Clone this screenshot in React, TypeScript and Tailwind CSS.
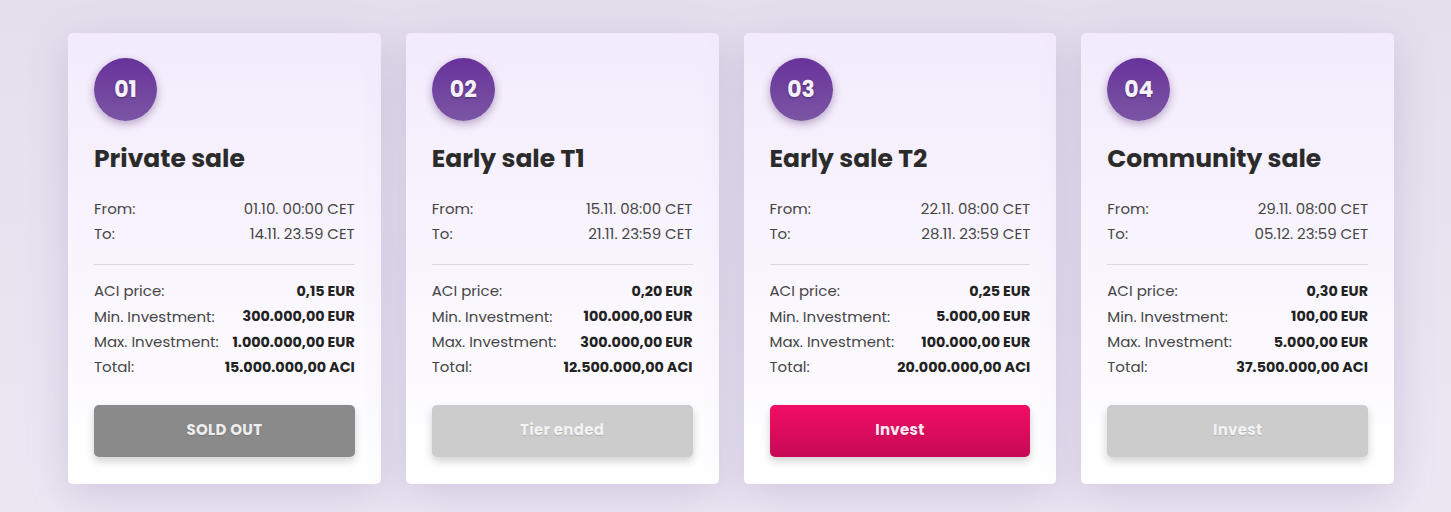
type Tier = {
  num: string;
  title: string;
  from: string;
  to: string;
  price: string;
  min: string;
  max: string;
  total: string;
  button: string;
  variant: "sold" | "ended" | "active" | "disabled";
};

const tiers: Tier[] = [
  {
    num: "01",
    title: "Private sale",
    from: "01.10. 00:00 CET",
    to: "14.11. 23.59 CET",
    price: "0,15 EUR",
    min: "300.000,00 EUR",
    max: "1.000.000,00 EUR",
    total: "15.000.000,00 ACI",
    button: "SOLD OUT",
    variant: "sold",
  },
  {
    num: "02",
    title: "Early sale T1",
    from: "15.11. 08:00 CET",
    to: "21.11. 23:59 CET",
    price: "0,20 EUR",
    min: "100.000,00 EUR",
    max: "300.000,00 EUR",
    total: "12.500.000,00 ACI",
    button: "Tier ended",
    variant: "ended",
  },
  {
    num: "03",
    title: "Early sale T2",
    from: "22.11. 08:00 CET",
    to: "28.11. 23:59 CET",
    price: "0,25 EUR",
    min: "5.000,00 EUR",
    max: "100.000,00 EUR",
    total: "20.000.000,00 ACI",
    button: "Invest",
    variant: "active",
  },
  {
    num: "04",
    title: "Community sale",
    from: "29.11. 08:00 CET",
    to: "05.12. 23:59 CET",
    price: "0,30 EUR",
    min: "100,00 EUR",
    max: "5.000,00 EUR",
    total: "37.500.000,00 ACI",
    button: "Invest",
    variant: "disabled",
  },
];

const buttonStyles = {
  sold: "bg-[#8a8a8a] text-[#eeeeee]",
  ended: "bg-[#cccccc] text-[#f2f2f2]",
  active: "bg-gradient-to-b from-[#f20d66] to-[#c60a55] text-[#fbe7f0]",
  disabled: "bg-[#cccccc] text-[#f2f2f2]",
};

function Row({ label, value, bold, h }: { label: string; value: string; bold?: boolean; h: string }) {
  return (
    <div className={`flex items-center justify-between whitespace-nowrap ${h}`}>
      <span className="text-[#454545]">{label}</span>
      <span className={bold ? "font-bold text-[#222222] text-[14.3px]" : "text-[#454545]"}>{value}</span>
    </div>
  );
}

function TierCard({ tier }: { tier: Tier }) {
  return (
    <div className="h-[451px] rounded-[5px] bg-gradient-to-b from-[#f3ebfc] to-white px-[26px] pt-[25px] shadow-[0_10px_40px_rgba(120,90,170,0.22)]">
      {/* Number badge */}
      <div className="w-[63px] h-[63px] rounded-full bg-gradient-to-b from-[#68329a] to-[#7a55a4] flex items-center justify-center shadow-[0_3px_8px_rgba(60,20,90,0.35)]">
        <span className="text-[#f6f0fb] font-bold text-[22px] [text-shadow:0_1px_2px_rgba(0,0,0,0.35)]">{tier.num}</span>
      </div>
      <h2 className="mt-[21px] text-[25px] font-bold text-[#2b2b2b] leading-[34px] whitespace-nowrap">{tier.title}</h2>
      <div className="mt-[20.5px] text-[15px]">
        <Row label="From:" value={tier.from} h="h-[25px]" />
        <Row label="To:" value={tier.to} h="h-[25px]" />
      </div>
      <div className="mt-[17.5px] border-t border-[#dcd8e0]" />
      <div className="mt-[14px] text-[15px]">
        <Row label="ACI price:" value={tier.price} bold h="h-[25.3px]" />
        <Row label="Min. Investment:" value={tier.min} bold h="h-[25.3px]" />
        <Row label="Max. Investment:" value={tier.max} bold h="h-[25.3px]" />
        <Row label="Total:" value={tier.total} bold h="h-[25.3px]" />
      </div>
      <button
        className={`mt-[24.5px] w-full h-[52px] rounded-[5px] font-bold text-[15px] tracking-[0.3px] shadow-[0_4px_8px_rgba(0,0,0,0.18)] [text-shadow:0_1px_1px_rgba(0,0,0,0.15)] ${buttonStyles[tier.variant]}`}
      >
        {tier.button}
      </button>
    </div>
  );
}

export default function App() {
  return (
    <div
      className="min-h-[512px] w-full bg-gradient-to-b from-[#e4dfec] to-[#ebe7f2] pt-[33px] pl-[68px]"
      style={{ fontFamily: "Poppins, Inter, 'Noto Sans', sans-serif" }}
    >
      <div className="grid grid-cols-4 w-[1326px] gap-[25px]">
        {tiers.map((t) => (
          <TierCard key={t.num} tier={t} />
        ))}
      </div>
    </div>
  );
}
